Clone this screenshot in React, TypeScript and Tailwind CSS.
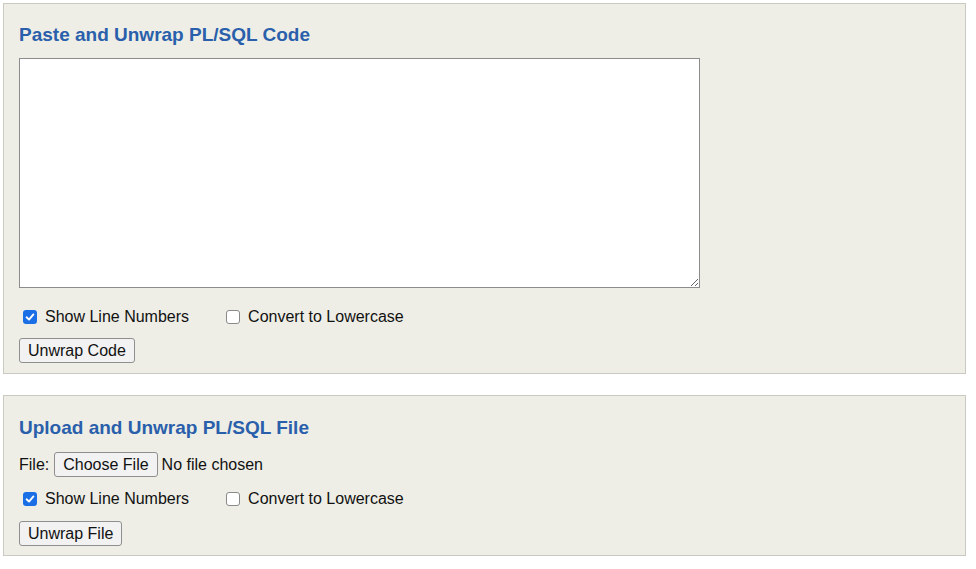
import React from "react";

function Box({ checked }: { checked: boolean }) {
  return checked ? (
    <span className="inline-flex h-[14px] w-[14px] items-center justify-center rounded-[3px] bg-[#1a6ee6]">
      <svg width="10" height="10" viewBox="0 0 10 10">
        <path d="M1.6 5.3 L4 7.6 L8.4 2.4" fill="none" stroke="#fff" strokeWidth="1.9" strokeLinecap="round" strokeLinejoin="round" />
      </svg>
    </span>
  ) : (
    <span className="inline-block h-[14px] w-[14px] rounded-[3px] border border-[#8a8a8a] bg-white" />
  );
}

function Options() {
  return (
    <div className="flex h-[20px] items-center">
      <div className="ml-[4px] flex items-center">
        <Box checked />
        <span className="ml-[8px]">Show Line Numbers</span>
      </div>
      <div className="ml-[37px] flex items-center">
        <Box checked={false} />
        <span className="ml-[8px]">Convert to Lowercase</span>
      </div>
    </div>
  );
}

function Btn({ children }: { children: React.ReactNode }) {
  return (
    <button className="flex h-[25px] items-center rounded-[3px] border border-[#8f8f8f] bg-[#f2f2f2] px-[8px] text-[16px] leading-none text-[#111]">
      {children}
    </button>
  );
}

export default function App() {
  return (
    <div
      className="min-h-[569px] bg-white pl-[3px] pt-[3px] text-[16px] text-[#111]"
      style={{ fontFamily: '"Liberation Sans", Arial, sans-serif' }}
    >
      <div className="w-[963px] border border-[#cacac2] bg-[#eeeee6] pb-[10px] pl-[15px] pt-[20px]">
        <h2 className="text-[19px] font-bold leading-[22px] text-[#2a5fab]">Paste and Unwrap PL/SQL Code</h2>
        <textarea className="mt-[12px] block h-[230px] w-[681px] resize border border-[#8c8c8c] bg-white" />
        <div className="mt-[19px]">
          <Options />
        </div>
        <div className="mt-[11px] flex">
          <Btn>Unwrap Code</Btn>
        </div>
      </div>
      <div className="mt-[21px] w-[963px] border border-[#cacac2] bg-[#eeeee6] pb-[9px] pl-[15px] pt-[21px]">
        <h2 className="text-[19px] font-bold leading-[22px] text-[#2a5fab]">Upload and Unwrap PL/SQL File</h2>
        <div className="mt-[13px] flex items-center">
          <span>File:</span>
          <span className="ml-[5px]">
            <Btn>Choose File</Btn>
          </span>
          <span className="ml-[4px]">No file chosen</span>
        </div>
        <div className="mt-[12px]">
          <Options />
        </div>
        <div className="mt-[12px] flex">
          <Btn>Unwrap File</Btn>
        </div>
      </div>
    </div>
  );
}
